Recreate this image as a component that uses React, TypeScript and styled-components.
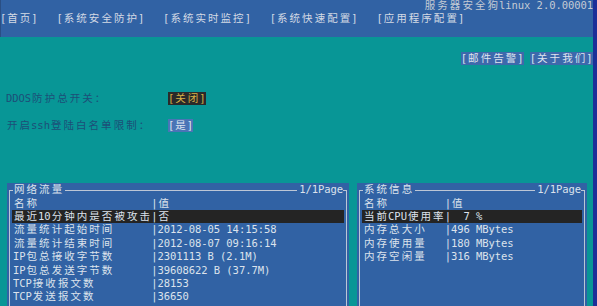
import React from "react";
import styled, { createGlobalStyle } from "styled-components";

const CW = 6.28;
const RH = 13.4;

const Global = createGlobalStyle`
  html, body {
    margin: 0;
    padding: 0;
    background: #089696;
  }
  body {
    font-family: "DejaVu Sans Mono", "Noto Sans CJK SC", monospace;
    font-size: 10.5px;
  }
`;

const Page = styled.div`
  width: 597px;
  height: 306px;
  overflow: hidden;
  display: flex;
`;

const Screen = styled.div`
  flex: 1;
  display: flex;
  flex-direction: column;
  overflow: hidden;
  background: #089696;
  & > * {
    flex: none;
  }
`;

const WindowEdge = styled.div`
  width: 4px;
  background: #1c2f98;
`;

const TopBar = styled.div`
  height: 37px;
  background: #3162a4;
  overflow: hidden;
  border-left: 1px solid #2a4f84;
`;

const TitleLine = styled.div`
  margin-top: -1px;
  height: ${RH}px;
  display: flex;
  justify-content: flex-end;
  color: #c4cad4;
`;

const MenuLine = styled.div`
  margin-top: -0.7px;
  height: ${RH}px;
  display: flex;
  gap: ${CW * 3}px;
  margin-left: -1px;
  color: #d4dae4;
`;

const Line = styled.div`
  height: ${RH}px;
  display: flex;
  white-space: nowrap;
`;

const Glyph = styled.span<{ $wide: boolean }>`
  display: inline-block;
  width: ${(p) => (p.$wide ? CW * 2 : CW)}px;
  line-height: ${RH}px;
  height: ${RH}px;
  vertical-align: top;
  text-align: center;
  white-space: pre;
  font-size: 10.5px;
`;

const isWide = (ch: string) => /[\u2e80-\u9fff\u3000-\u303f\uff00-\uffef]/.test(ch);

const Term = ({ text }: { text: string }) => (
  <>
    {[...text].map((ch, i) => (
      <Glyph key={i} $wide={isWide(ch)}>
        {ch}
      </Glyph>
    ))}
  </>
);

const Content = styled.div`
  padding-top: 14.9px;
  display: flex;
  flex-direction: column;
  & > * {
    flex: none;
  }
`;

const ActionBar = styled(Line)`
  justify-content: flex-end;
  gap: ${CW}px;
  margin-right: 0.5px;
`;

const ActionItem = styled.span`
  display: inline-flex;
  background: #3d69ac;
  color: #dfe4ee;
`;

const Settings = styled.div`
  margin-top: ${RH * 2}px;
  display: flex;
  flex-direction: column;
  gap: ${RH}px;
`;

const SettingRow = styled(Line)`
  padding-left: 6px;
`;

const SettingLabel = styled.span`
  width: 162px;
  display: inline-flex;
  color: #1d4f78;
`;

const Toggle = styled.span<{ $on?: boolean }>`
  display: inline-flex;
  background: ${(p) => (p.$on ? "#4a74b6" : "#2a2a2a")};
  color: ${(p) => (p.$on ? "#dde4f0" : "#d6b247")};
`;

const PanelRow = styled.div`
  margin-top: 51px;
  padding-left: 7px;
  display: flex;
  gap: 8px;
`;

const Panel = styled.div<{ $w: number }>`
  width: ${(p) => p.$w}px;
  height: 140px;
  flex: none;
  background: #3162a4;
  padding: 0 2px;
  box-sizing: border-box;
  color: #dce2ec;
  display: flex;
  flex-direction: column;
`;

const FrameTop = styled.div`
  height: ${RH}px;
  flex: none;
  display: flex;
`;

const Rule = styled.span<{ $side?: "left" | "right" }>`
  align-self: flex-end;
  height: ${RH / 2}px;
  box-sizing: border-box;
  border-top: 1px solid #bcc6d6;
  border-left: ${(p) => (p.$side === "left" ? "1px solid #bcc6d6" : "none")};
  border-right: ${(p) => (p.$side === "right" ? "1px solid #bcc6d6" : "none")};
  width: ${(p) => (p.$side ? "4px" : "auto")};
  flex: ${(p) => (p.$side ? "none" : "1")};
  margin: ${(p) => (p.$side ? "0" : "0 2px")};
`;

const FrameBody = styled.div`
  flex: 1;
  border-left: 1px solid #bcc6d6;
  border-right: 1px solid #bcc6d6;
  padding: 0 2px;
`;

const Row = styled(Line)<{ $active?: boolean }>`
  padding-left: 1px;
  background: ${(p) => (p.$active ? "#242424" : "transparent")};
`;

const Cell = styled.span<{ $cells: number }>`
  display: inline-flex;
  width: ${(p) => p.$cells * CW}px;
  flex: none;
  overflow: hidden;
`;

type Item = [string, string];

const traffic: Item[] = [
  ["最近10分钟内是否被攻击", "否"],
  ["流量统计起始时间", "2012-08-05 14:15:58"],
  ["流量统计结束时间", "2012-08-07 09:16:14"],
  ["IP包总接收字节数", "2301113 B (2.1M)"],
  ["IP包总发送字节数", "39608622 B (37.7M)"],
  ["TCP接收报文数", "28153"],
  ["TCP发送报文数", "36650"],
];

const system: Item[] = [
  ["当前CPU使用率", "  7 %"],
  ["内存总大小", "496 MBytes"],
  ["内存使用量", "180 MBytes"],
  ["内存空闲量", "316 MBytes"],
];

const menu = ["[首页]", "[系统安全防护]", "[系统实时监控]", "[系统快速配置]", "[应用程序配置]"];

const InfoPanel = ({
  title,
  width,
  labelCells,
  items,
}: {
  title: string;
  width: number;
  labelCells: number;
  items: Item[];
}) => (
  <Panel $w={width}>
    <FrameTop>
      <Rule $side="left" />
      <Term text={title} />
      <Rule />
      <Term text="1/1Page" />
      <Rule $side="right" />
    </FrameTop>
    <FrameBody>
      <Row>
        <Cell $cells={labelCells}>
          <Term text="名称" />
        </Cell>
        <Term text="|值" />
      </Row>
      {items.map(([k, v], i) => (
        <Row key={k} $active={i === 0}>
          <Cell $cells={labelCells}>
            <Term text={k} />
          </Cell>
          <Term text={"|" + v} />
        </Row>
      ))}
    </FrameBody>
  </Panel>
);

export default function App() {
  return (
    <Page>
      <Global />
      <Screen>
        <TopBar>
          <TitleLine>
            <Term text="服务器安全狗linux 2.0.00001" />
          </TitleLine>
          <MenuLine>
            {menu.map((m) => (
              <span key={m}>
                <Term text={m} />
              </span>
            ))}
          </MenuLine>
        </TopBar>
        <Content>
          <ActionBar>
            <ActionItem>
              <Term text="[邮件告警]" />
            </ActionItem>
            <ActionItem>
              <Term text="[关于我们]" />
            </ActionItem>
          </ActionBar>
          <Settings>
            <SettingRow>
              <SettingLabel>
                <Term text="DDOS防护总开关：" />
              </SettingLabel>
              <Toggle>
                <Term text="[关闭]" />
              </Toggle>
            </SettingRow>
            <SettingRow>
              <SettingLabel>
                <Term text="开启ssh登陆白名单限制：" />
              </SettingLabel>
              <Toggle $on>
                <Term text="[是]" />
              </Toggle>
            </SettingRow>
          </Settings>
          <PanelRow>
            <InfoPanel title="网络流量" width={342} labelCells={22} items={traffic} />
            <InfoPanel title="系统信息" width={230} labelCells={13} items={system} />
          </PanelRow>
        </Content>
      </Screen>
      <WindowEdge />
    </Page>
  );
}
